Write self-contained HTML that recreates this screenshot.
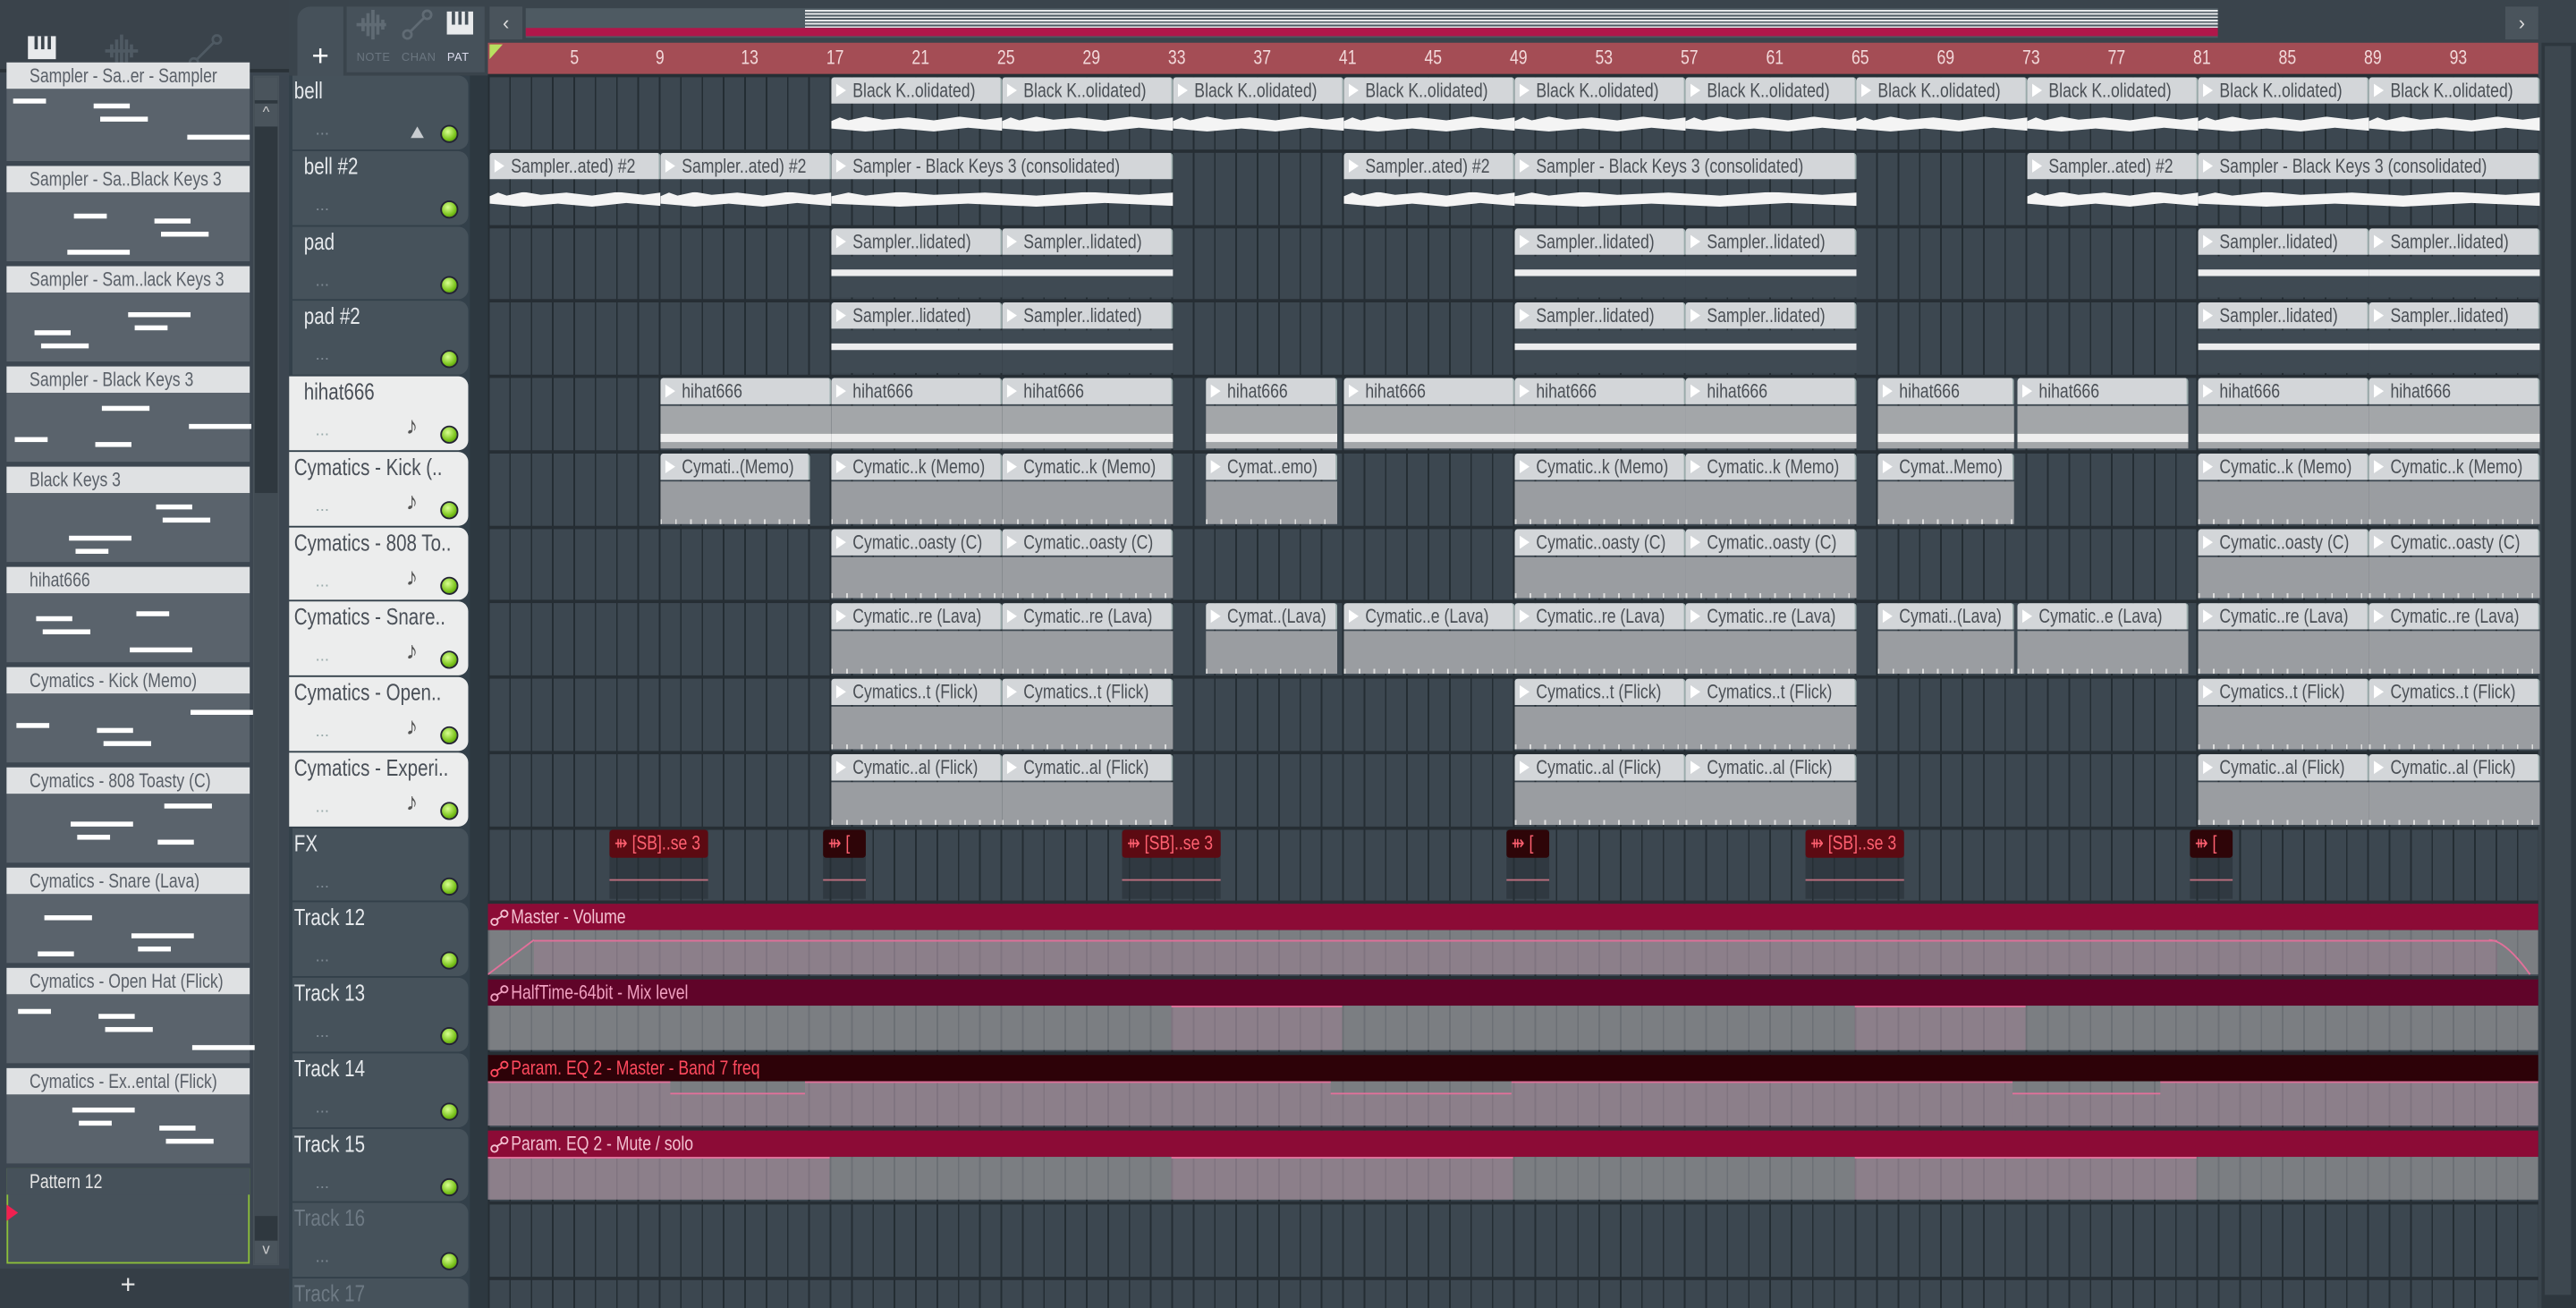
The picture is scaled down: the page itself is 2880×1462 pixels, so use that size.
<!DOCTYPE html>
<html><head><meta charset="utf-8">
<style>
*{margin:0;padding:0;box-sizing:border-box}
html,body{width:2880px;height:1462px;overflow:hidden;background:#2f3a42}
#s{position:absolute;left:0;top:0;width:1568px;height:796px;transform:scale(1.83673);transform-origin:0 0;font-family:"Liberation Sans Narrow","Liberation Sans",sans-serif;font-size:12px;background:#3a444c;overflow:hidden}
.a{position:absolute}
.n{display:inline-block;transform:scaleX(.8);transform-origin:0 0;white-space:nowrap}
.clip{position:absolute;overflow:hidden}
.ch{position:absolute;left:0;right:0;top:0;height:16px;background:#d3d6d9;color:#4a4f55;font-size:12px;line-height:16px;padding-left:13px;white-space:nowrap;border-radius:2px 2px 0 0;border-right:1px solid #9aa}
.ch:before{content:"";position:absolute;left:3px;top:4px;border-left:6px solid #fff;border-top:4px solid transparent;border-bottom:4px solid transparent}
.dot{position:absolute;width:11px;height:11px;border-radius:50%;background:radial-gradient(circle at 40% 35%,#d8ff90,#79c21a 60%,#3d6a10);border:1px solid #223}
.lbl{position:absolute;color:#e6e9ec;font-size:14px}
</style></head><body><div id="s">
<div class="a" style="left:0;top:0;width:176px;height:796px;background:#3c4650"></div>
<div class="a" style="left:0;top:0;width:176px;height:44px;background:#3a434b;border-bottom:2px solid #2a3238"></div>
<div class="a" style="left:17px;top:22px;width:17px;height:14px;background:#e8eaec"></div>
<div class="a" style="left:21px;top:22px;width:2px;height:8px;background:#3a434b"></div>
<div class="a" style="left:25px;top:22px;width:2px;height:8px;background:#3a434b"></div>
<div class="a" style="left:29px;top:22px;width:2px;height:8px;background:#3a434b"></div>
<svg class="a" style="left:62px;top:20px" width="24" height="22"><path d="M2 11 H22 M6 7 V15 M9 4 V18 M12 1 V21 M15 4 V18 M18 7 V15" stroke="#4f5a63" stroke-width="2"/></svg>
<svg class="a" style="left:114px;top:20px" width="22" height="22"><circle cx="4" cy="18" r="2.5" fill="none" stroke="#4f5a63" stroke-width="1.5"/><circle cx="18" cy="4" r="2.5" fill="none" stroke="#4f5a63" stroke-width="1.5"/><path d="M6 16 L16 6" stroke="#4f5a63" stroke-width="1.5"/></svg>
<div class="a" style="left:154px;top:46px;width:16px;height:724px;background:#2f383f;border:1px solid #48525a"></div>
<div class="a" style="left:155px;top:47px;width:14px;height:14px;background:#4a545c"></div>
<div class="a" style="left:155px;top:63px;width:14px;height:14px;background:#4a545c;color:#ccc;font-size:9px;text-align:center">^</div>
<div class="a" style="left:155px;top:300px;width:14px;height:440px;background:#414b53"></div>
<div class="a" style="left:155px;top:755px;width:14px;height:14px;background:#4a545c;color:#ccc;font-size:9px;text-align:center">v</div>
<div class="a" style="left:0;top:772px;width:176px;height:24px;background:#353e46;color:#e8e8e8;font-size:16px;text-align:center;line-height:22px;padding-right:20px">+</div>
<div class="a" style="left:176px;top:0;width:121px;height:46px;background:#3a444c"></div>
<div class="a" style="left:181px;top:4px;width:28px;height:42px;background:#46515a;border-radius:8px 0 0 0;color:#fff;font-size:18px;text-align:center;line-height:60px">+</div>
<div class="a" style="left:211px;top:4px;width:84px;height:40px;background:#46515a"></div>
<div class="a" style="left:217px;top:32px;color:#6b7680;font-size:7px;letter-spacing:.3px">NOTE&nbsp;&nbsp; CHAN&nbsp;&nbsp; <span style="color:#dde">PAT</span></div>
<div class="a" style="left:272px;top:7px;width:16px;height:14px;background:#e8eaec"></div>
<div class="a" style="left:275px;top:7px;width:2px;height:8px;background:#46515a"></div>
<div class="a" style="left:279px;top:7px;width:2px;height:8px;background:#46515a"></div>
<div class="a" style="left:283px;top:7px;width:2px;height:8px;background:#46515a"></div>
<svg class="a" style="left:215px;top:5px" width="22" height="20"><path d="M2 10 H20 M6 6 V14 M9 3 V17 M12 1 V19 M15 4 V16 M18 7 V13" stroke="#606b74" stroke-width="2"/></svg>
<svg class="a" style="left:244px;top:5px" width="20" height="20"><circle cx="4" cy="16" r="2.5" fill="none" stroke="#606b74" stroke-width="1.5"/><circle cx="16" cy="4" r="2.5" fill="none" stroke="#606b74" stroke-width="1.5"/><path d="M6 14 L14 6" stroke="#606b74" stroke-width="1.5"/></svg>
<div class="a" style="left:297px;top:0;width:1271px;height:26px;background:#3a444c"></div>
<div class="a" style="left:298px;top:4px;width:20px;height:20px;background:#4a545c;color:#ddd;text-align:center;line-height:20px">‹</div>
<div class="a" style="left:1525px;top:4px;width:20px;height:20px;background:#4a545c;color:#ddd;text-align:center;line-height:20px">›</div>
<div class="a" style="left:320px;top:5px;width:1030px;height:18px;background:#4e5a62"></div>
<div class="a" style="left:490px;top:5px;width:860px;height:12px;background:repeating-linear-gradient(#4e5a62 0 1px,#e6e8ea 1px 2px)"></div>
<div class="a" style="left:320px;top:17px;width:1030px;height:5px;background:#b0174a"></div>
<div class="a" style="left:297px;top:26px;width:1248px;height:20px;background:#a44d55"></div>
<div class="a" style="left:1547px;top:26px;width:21px;height:770px;background:#2e373e"></div>
<div class="a" style="left:1549px;top:28px;width:16px;height:760px;background:#3d474f"></div>
<div class="a" style="left:176px;top:46px;width:121px;height:750px;background:#33404a"></div>
</div>
<script>
const S=document.getElementById('s');
function add(h){S.insertAdjacentHTML('beforeend',h)}
const TH=45.75,T0=46,GX=298,BW=13;
const bx=b=>GX+(b-1)*BW;
let r='';[1,5,9,13,17,21,25,29,33,37,41,45,49,53,57,61,65,69,73,77,81,85,89,93].forEach(n=>{r+=`<div class="a" style="left:${bx(n)-3}px;top:28px;color:#f2d9da;font-size:12px"><span class="n">${n==1?'':n}</span></div>`});
r+=`<div class="a" style="left:298px;top:27px;border-left:8px solid #b8e060;border-bottom:9px solid transparent"></div>`;
add(r);
let g=`<div class="a" style="left:286px;top:46px;width:11px;height:750px;background:#2d3840"></div><div class="a" style="left:297px;top:46px;width:1248px;height:750px;background:repeating-linear-gradient(90deg,#242d33 0 1px,#3c4750 1px 13px)"></div>`;
for(let i=0;i<18;i++)g+=`<div class="a" style="left:297px;top:${T0+i*TH-1}px;width:1248px;height:2px;background:#262e34"></div>`;
add(g);
const names=['bell','bell #2','pad','pad #2','hihat666','Cymatics - Kick (..','Cymatics - 808 To..','Cymatics - Snare..','Cymatics - Open..','Cymatics - Experi..','FX','Track 12','Track 13','Track 14','Track 15','Track 16','Track 17'];
let t='';
names.forEach((n,i)=>{const y=T0+i*TH;const white=i>=4&&i<=9;const ind=(i>=1&&i<=4)?9:3;
t+=`<div class="a" style="left:${white?176:178}px;top:${y}px;width:${white?109:107}px;height:${TH-1}px;background:${white?'#eceded':'#46525b'};border-radius:0 6px 6px 0"></div>`;
t+=`<div class="lbl" style="left:${176+ind}px;top:${y+1}px;width:${108-ind}px;overflow:hidden;color:${white?'#4a5058':(i>=15?'#6e7a84':'#e6e9ec')}"><span class="n">${n}</span></div>`;
t+=`<div class="a" style="left:192px;top:${y+28}px;color:${white?'#9aa':'#7f8a94'};font-size:10px">...</div>`;
t+=`<div class="dot" style="left:268px;top:${y+30}px"></div>`;
if(white)t+=`<div class="a" style="left:247px;top:${y+22}px;color:#555;font-size:15px">♪</div>`;
});
t+=`<div class="a" style="left:250px;top:77px;border-bottom:7px solid #c8ccd0;border-left:4px solid transparent;border-right:4px solid transparent"></div>`;
add(t);
function clip(row,b,len,txt,type){const x=bx(b),w=len*BW,y=T0+row*TH;let body='';
if(type=='w')body=`<div class="a" style="left:0;right:0;top:24px;height:9px;background:#f4f4f4;clip-path:polygon(0 30%,5% 5%,10% 25%,20% 0,30% 20%,45% 5%,60% 25%,75% 0,90% 20%,100% 5%,100% 95%,80% 75%,60% 100%,40% 80%,20% 100%,0 80%)"></div>`;
if(type=='s')body=`<div class="a" style="left:0;right:0;top:17px;bottom:0;background:#3f4a53"></div><div class="a" style="left:0;right:0;top:25px;height:4px;background:#fff;opacity:.9"></div>`;
if(type=='h')body=`<div class="a" style="left:0;right:0;top:17px;bottom:0;background:#a3a6a9"></div><div class="a" style="left:0;right:0;top:34px;height:5px;background:#eee"></div>`;
if(type=='g')body=`<div class="a" style="left:0;right:0;top:17px;bottom:0;background:#9a9da1"></div><div class="a" style="left:0;right:0;bottom:0;height:3px;background:repeating-linear-gradient(90deg,#ddd 0 1px,transparent 1px 9px)"></div>`;
add(`<div class="clip" style="left:${x}px;top:${y+1}px;width:${w}px;height:${TH-3}px">${body}<div class="ch"><span class="n">${txt}</span></div></div>`)}
[17,25,33,41,49,57,65,73,81,89].forEach(b=>clip(0,b,8,'Black K..olidated)','w'));
[[1,8,'Sampler..ated) #2'],[9,8,'Sampler..ated) #2'],[17,16,'Sampler - Black Keys 3 (consolidated)'],[41,8,'Sampler..ated) #2'],[49,16,'Sampler - Black Keys 3 (consolidated)'],[73,8,'Sampler..ated) #2'],[81,16,'Sampler - Black Keys 3 (consolidated)']].forEach(a=>clip(1,a[0],a[1],a[2],'w'));
[2,3].forEach(r=>[17,25,49,57,81,89].forEach(b=>clip(r,b,8,'Sampler..lidated)','s')));
[[9,8],[17,8],[25,8],[34.5,6.2],[41,8],[49,8],[57,8],[66,6.4],[72.5,8],[81,8],[89,8]].forEach(a=>clip(4,a[0],a[1],'hihat666','h'));
[[9,7,'Cymati..(Memo)'],[17,8,'Cymatic..k (Memo)'],[25,8,'Cymatic..k (Memo)'],[34.5,6.2,'Cymat..emo)'],[49,8,'Cymatic..k (Memo)'],[57,8,'Cymatic..k (Memo)'],[66,6.4,'Cymat..Memo)'],[81,8,'Cymatic..k (Memo)'],[89,8,'Cymatic..k (Memo)']].forEach(a=>clip(5,a[0],a[1],a[2],'g'));
[17,25,49,57,81,89].forEach(b=>clip(6,b,8,'Cymatic..oasty (C)','g'));
[[17,8,'Cymatic..re (Lava)'],[25,8,'Cymatic..re (Lava)'],[34.5,6.2,'Cymat..(Lava)'],[41,8,'Cymatic..e (Lava)'],[49,8,'Cymatic..re (Lava)'],[57,8,'Cymatic..re (Lava)'],[66,6.4,'Cymati..(Lava)'],[72.5,8,'Cymatic..e (Lava)'],[81,8,'Cymatic..re (Lava)'],[89,8,'Cymatic..re (Lava)']].forEach(a=>clip(7,a[0],a[1],a[2],'g'));
[17,25,49,57,81,89].forEach(b=>clip(8,b,8,'Cymatics..t (Flick)','g'));
[17,25,49,57,81,89].forEach(b=>clip(9,b,8,'Cymatic..al (Flick)','g'));
[[371,60,'[SB]..se 3'],[501,26,'['],[683,60,'[SB]..se 3'],[917,26,'['],[1099,60,'[SB]..se 3'],[1333,26,'[']].forEach(a=>{const y=T0+10*TH;add(`<div class="a" style="left:${a[0]}px;top:${y+1}px;width:${a[1]}px;height:${TH-3}px;background:rgba(40,48,55,.6)"><div style="height:17px;background:${a[1]>30?'#5c0a12':'#2e0508'};color:#ff6070;font-size:12px;line-height:17px;padding-left:3px;border-radius:2px;white-space:nowrap;overflow:hidden"><span class="n">⇻ ${a[2]}</span></div><div class="a" style="left:0;right:0;top:30px;height:1px;background:#c07080"></div></div>`)});
const au=[[11,'#8c0b36','#f2c0d0','Master - Volume'],[12,'#600429','#f0a0c0','HalfTime-64bit - Mix level'],[13,'#2d0208','#ff4a5e','Param. EQ 2 - Master - Band 7 freq'],[14,'#8c0b36','#f2c0d0','Param. EQ 2 - Mute / solo']];
au.forEach(a=>{const y=T0+a[0]*TH;add(`<div class="a" style="left:297px;top:${y+1}px;width:1248px;height:16px;background:${a[1]};color:${a[2]};line-height:16px;padding-left:14px"><span class="n">${a[3]}</span></div><svg class="a" style="left:298px;top:${y+4}px" width="12" height="11"><circle cx="3" cy="8" r="2" fill="none" stroke="${a[2]}"/><circle cx="9" cy="3" r="2" fill="none" stroke="${a[2]}"/><path d="M4.5 6.5 L7.5 4.5" stroke="${a[2]}"/></svg><div class="a" style="left:297px;top:${y+17}px;width:1248px;height:${TH-19}px;background:repeating-linear-gradient(90deg,#6c7075 0 1px,#7b7e82 1px 13px)"></div>`)});
function pk(row,x1,x2,top){const y=T0+row*TH+17;add(`<div class="a" style="left:${x1}px;top:${y+top}px;width:${x2-x1}px;height:${TH-19-top}px;background:rgba(200,130,170,.22);border-top:1px solid #e2709a"></div>`)}
pk(11,325,1520,6);pk(12,713,817,0);pk(12,1129,1233,0);pk(14,297,505,0);pk(14,713,921,0);pk(14,1129,1337,0);
[[297,408,0],[408,490,7],[490,810,0],[810,920,7],[920,1225,0],[1225,1315,7],[1315,1545,0]].forEach(s=>pk(13,s[0],s[1],s[2]));
add(`<svg class="a" style="left:297px;top:${T0+11*TH+17}px" width="30" height="28"><path d="M0 27 L28 6" stroke="#e2709a" fill="none"/></svg>`);
add(`<svg class="a" style="left:1515px;top:${T0+11*TH+17}px" width="30" height="28"><path d="M0 6 Q10 6 25 27" stroke="#e2709a" fill="none"/></svg>`);
const li=['Sampler - Sa..er - Sampler','Sampler - Sa..Black Keys 3','Sampler - Sam..lack Keys 3','Sampler - Black Keys 3','Black Keys 3','hihat666','Cymatics - Kick (Memo)','Cymatics - 808 Toasty (C)','Cymatics - Snare (Lava)','Cymatics - Open Hat (Flick)','Cymatics - Ex..ental (Flick)','Pattern 12'];
let L='';li.forEach((n,i)=>{const top=i==0?38:40+i*61;
L+=`<div class="a" style="left:4px;top:${top}px;width:148px;height:${i==0?60:58}px;background:${i==11?'#46515a':'#5a636c'};${i==11?'border:1px solid #8cbf3a;':''}"></div>`;
L+=`<div class="a" style="left:4px;top:${top}px;width:148px;height:16px;background:${i==11?'#46515a':'#dfe1e3'};color:${i==11?'#e6e6e6':'#5a6068'};font-size:12px;line-height:16px;padding-left:14px;white-space:nowrap;overflow:hidden"><span class="n">${n}</span></div>`;
if(i<11){for(let k=0;k<4;k++){const yy=top+22+((i*7+k*11)%30);const xx=8+((i*37+k*53)%110);L+=`<div class="a" style="left:${xx}px;top:${yy}px;width:${20+(k*9)%25}px;height:3px;background:#fff"></div>`}}
});
L+=`<div class="a" style="left:4px;top:733px;border-left:7px solid #f02050;border-top:5px solid transparent;border-bottom:5px solid transparent"></div>`;
add(L);
</script>
</body></html>
